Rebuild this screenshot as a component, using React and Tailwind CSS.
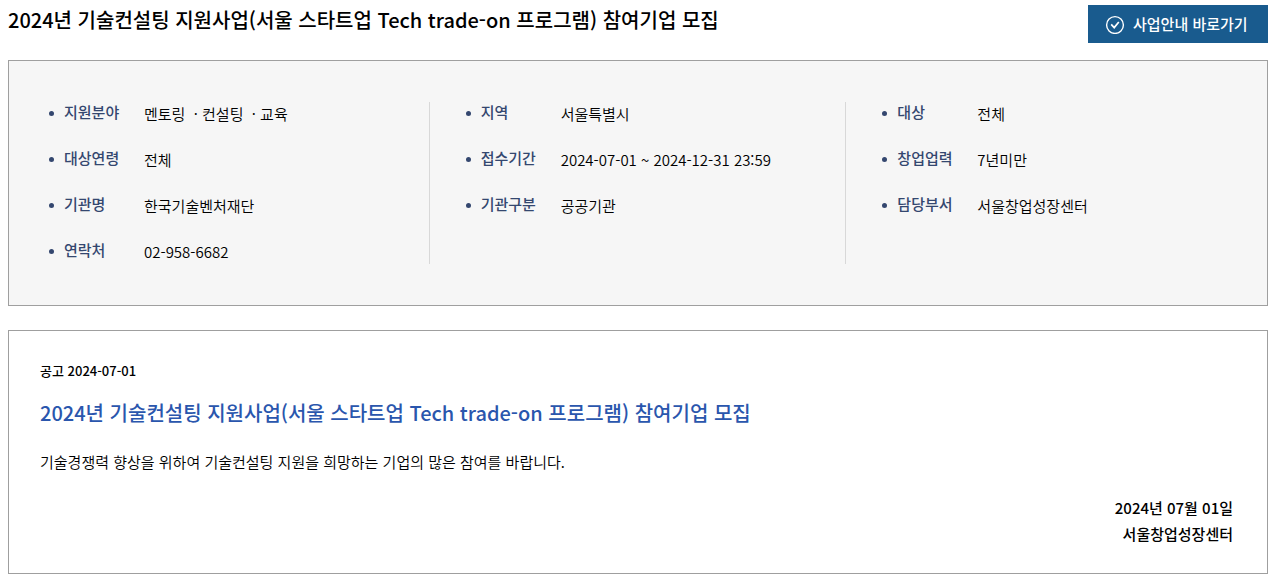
const TITLE = "2024년 기술컨설팅 지원사업(서울 스타트업 Tech trade-on 프로그램) 참여기업 모집";

const COLUMNS = [
  [
    ["지원분야", "멘토링\u00a0 · 컨설팅\u00a0 · 교육"],
    ["대상연령", "전체"],
    ["기관명", "한국기술벤처재단"],
    ["연락처", "02-958-6682"],
  ],
  [
    ["지역", "서울특별시"],
    ["접수기간", "2024-07-01 ~ 2024-12-31 23:59"],
    ["기관구분", "공공기관"],
  ],
  [
    ["대상", "전체"],
    ["창업업력", "7년미만"],
    ["담당부서", "서울창업성장센터"],
  ],
];

function CheckCircle() {
  return (
    <svg className="size-5" viewBox="0 0 20 20" fill="none" stroke="currentColor" aria-hidden="true">
      <circle cx="10" cy="11" r="8.4" strokeWidth="1.4" />
      <path d="M6.2 10.4l3 3.2 4.6-5.6" strokeWidth="1.7" />
    </svg>
  );
}

function InfoColumn({ rows }) {
  return (
    <dl className="flex flex-col gap-[22px] border-r border-[#d8d8d8] pl-9 last:border-r-0">
      {rows.map(([label, value]) => (
        <div key={label} className="flex items-center">
          <dt className="flex w-[95px] items-center pb-1 leading-5 font-medium text-[#34476f]">
            <span className="mt-0.5 mr-[10px] size-[5px] rounded-full bg-[#34476f]" />
            {label}
          </dt>
          <dd className="leading-6 font-[350] text-black">{value}</dd>
        </div>
      ))}
    </dl>
  );
}

export default function App() {
  return (
    <main
      lang="ko"
      className="bg-white pt-[5px] pr-1 pb-0.5 pl-2 font-['Noto_Sans_CJK_KR',sans-serif] text-[15px] text-black"
    >
      <header className="flex items-start justify-between">
        <h1 className="text-[20px] leading-[30px] font-medium">{TITLE}</h1>
        <a
          href="#guide"
          className="flex h-[38px] w-[180px] items-center gap-2 bg-[#195b8e] pl-[17px] font-medium text-white"
        >
          <CheckCircle />
          사업안내 바로가기
        </a>
      </header>

      <section className="mt-[17px] grid grid-cols-3 border border-[#9f9f9f] bg-[#f6f6f6] px-1 py-[41px]">
        {COLUMNS.map((rows) => (
          <InfoColumn key={rows[0][0]} rows={rows} />
        ))}
      </section>

      <section className="mt-6 border border-[#9f9f9f] px-[31px] pt-[30px] pb-[26px]">
        <p className="text-[13px] leading-5 font-medium">공고 2024-07-01</p>
        <h2 className="mt-[17px] text-[20px] leading-[30px] font-medium text-[#2a56ad]">{TITLE}</h2>
        <p className="mt-[22px] leading-6 font-[350]">
          기술경쟁력 향상을 위하여 기술컨설팅 지원을 희망하는 기업의 많은 참여를 바랍니다.
        </p>
        <p className="mt-[21px] pr-[3px] text-right leading-[26px] font-medium">
          2024년 07월 01일
          <br />
          서울창업성장센터
        </p>
      </section>
    </main>
  );
}
